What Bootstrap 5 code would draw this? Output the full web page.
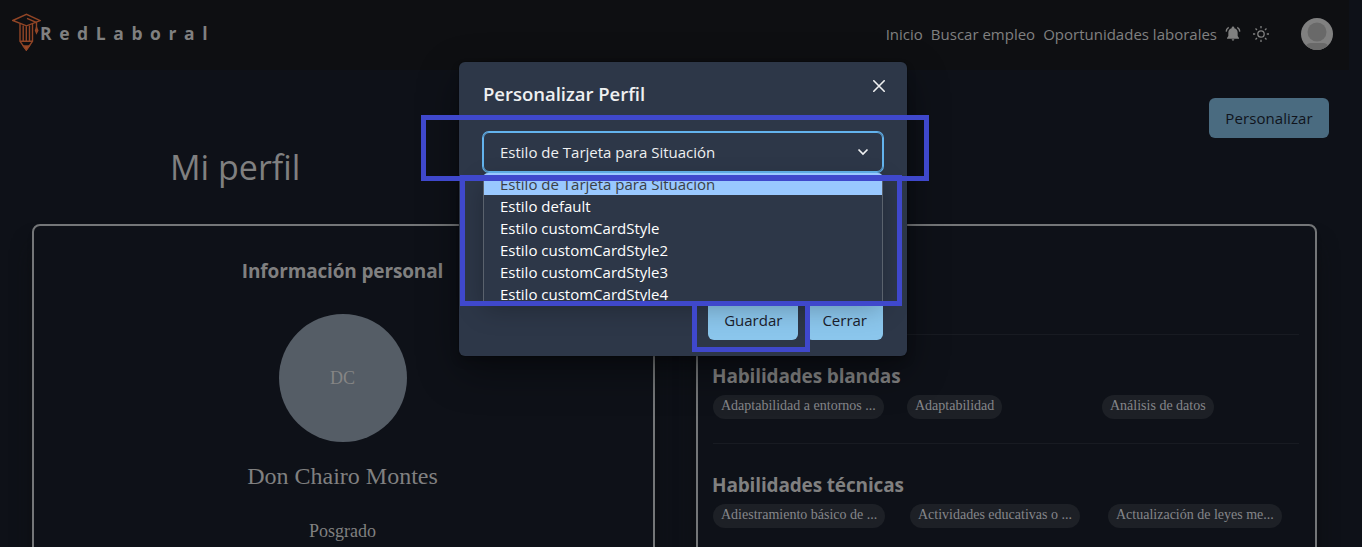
<!DOCTYPE html>
<html lang="es">
<head>
<meta charset="utf-8">
<meta name="viewport" content="width=device-width, initial-scale=1">
<title>RedLaboral - Mi perfil</title>
<link href="https://cdn.jsdelivr.net/npm/bootstrap@5.3.0/dist/css/bootstrap.min.css" rel="stylesheet">
<style>
body{background:#0e1118;color:#808080;font-family:"Open Sans","Noto Sans",sans-serif;font-size:15px;height:547px;overflow:hidden}
.serif-face{font-family:"Liberation Serif",serif}
.topbar{width:1349px;height:70px;background:#0e0f12;padding:0 16px 2px 12px}
.brand-text{font-weight:700;font-size:17.5px;letter-spacing:7.6px;line-height:24px;color:#808080;margin:-3px 0 0 -1px}
.topbar .nav-link{color:#808080;padding:0;line-height:24px}
.page-body{width:1349px;height:477px;overflow:hidden;padding:28px 20px 0 32px}
.btn-custom{--bs-btn-bg:#4a6b80;--bs-btn-color:#10141c;--bs-btn-border-width:0;--bs-btn-hover-bg:#527589;font-size:15px;font-weight:500;line-height:24px;padding:8px 16px;border-radius:6px;height:40px}
.btn-profile{width:120px;padding:8px 0;letter-spacing:.08px}
.page-title{font-size:34px;line-height:44px;font-weight:400;margin:7px 0 0 138px;height:79px;color:#808080}
.panel{background:#0e1118;border:2px solid #747678;border-radius:8px;height:340px;box-shadow:0 20px 25px -5px #0f1011,0 8px 10px -6px #0f1011}
.panel-info{width:623px;padding:33px 2px 0 0}
.panel-skills{width:621px;padding:108px 16px 0 15px}
.panel-title{font-size:19px;font-weight:700;line-height:24px;letter-spacing:-.15px;margin:0}
.initials{width:128px;height:128px;background:#555d66;font-size:18px;color:#858585;margin:31px auto 0}
.full-name{font-size:24px;line-height:32px;margin-top:18px}
.degree{font-size:18px;line-height:24px;margin-top:27px}
.skill-block{border-top:1px solid #181b22;height:109px;padding-top:29px}
.skill-block .panel-title{margin-left:-1px}
.skill-grid{display:grid;grid-template-columns:194px 195px auto;margin-top:7px;justify-items:start}
.skill-grid-wide{grid-template-columns:197px 198px auto}
.skill-tag{background:#1d2026;border-radius:12px;height:24px;padding:0 8px;font-size:14px;line-height:21px;color:#85868a;white-space:nowrap}
.dialog-wrap{position:absolute;left:459px;top:62px;width:448px}
.dialog-box{height:294px;border:0;border-radius:6px;background:#2d3748;color:#eff0f1;padding:0 24px 16px;box-shadow:0 0 0 1px rgba(0,0,0,.1),0 5px 10px rgba(0,0,0,.2),0 15px 40px rgba(0,0,0,.4)}
.dialog-title{font-size:18.5px;font-weight:600;letter-spacing:-.02px;line-height:30px;margin:17px 0 23px;height:30px}
.close-x{position:absolute;right:12px;top:8px;width:32px;height:32px;color:#eff0f1;background:none;border:0;padding:0;line-height:1}
.close-x svg{display:block;margin:auto}
.picker{height:40px;border:1px solid #63b3ed;box-shadow:0 0 0 1px #63b3ed;border-radius:6px;padding:0 13px 0 16px;line-height:24px}
.option-list{position:absolute;left:0;right:0;top:41px;height:130px;border:1px solid #5a626d;border-top:3px solid #99c8ff;border-radius:5px 5px 0 0;border-bottom:0;background:#2d3748;overflow:hidden;list-style:none;margin:0;padding:0;color:#fff}
.option-shadow{position:absolute;left:0;right:0;top:46px;height:125px;box-shadow:0 6px 24px rgba(0,0,0,.25)}
.option-list li{height:22px;line-height:23px;padding-left:16px}
.option-list li.chosen{background:#99c8ff;color:#3b4045;height:19px;line-height:17px}
.btn-dialog{--bs-btn-bg:#8bc6ec;--bs-btn-color:#1a202c;--bs-btn-hover-bg:#63b3ed}
.marker{position:absolute;border:5px solid #3f48cc;pointer-events:none}
.marker-select{left:-38px;top:53px;width:508px;height:66px}
.marker-list{left:1px;top:113px;width:442px;height:131px}
.marker-save{left:233px;top:239px;width:118px;height:51px}
</style>
</head>
<body>
<nav class="topbar d-flex align-items-center">
  <a class="d-flex align-items-center text-decoration-none" href="#">
    <svg width="29" height="38" viewBox="0 0 29 38" fill="none" stroke="#914526" stroke-width="1.4" style="margin-top:-4px">
      <path d="M.8 7.5 14.500 1.300 28.200 7.600 14.500 12.800ZM15 5.300 24.500 9.500V15"/>
      <path d="M24.500 14.500 23.500 17.500 24.500 20 25.800 17.500Z" fill="#914526"/>
      <path d="M8 11V28.300L14.300 37 20.500 28.300V11M11.200 12.600V27.800M14.300 13.200V27.800M17.500 12.600V27.800M8 28.300H20.500"/>
      <path d="M11.300 33H17.300L14.300 37Z" fill="#a54a25"/>
    </svg>
    <span class="brand-text">RedLaboral</span>
  </a>
  <div class="nav ms-auto align-items-center flex-nowrap gap-2">
    <a class="nav-link" href="#">Inicio</a>
    <a class="nav-link" href="#">Buscar empleo</a>
    <a class="nav-link" href="#">Oportunidades laborales</a>
    <svg width="16" height="16" viewBox="0 0 24 24" fill="#808080"><path d="M19 15V10C19 6.500 17 4.200 14 3.400V2.800a2 2 0 0 0-4 0v.6C7 4.200 5 6.500 5 10v5l-2 3v1h18v-1ZM10 20a2 2 0 0 0 4 0Z"/><path d="M5.500 2C3.200 3.500 2 5.500 1.800 8.500M18.500 2c2.300 1.500 3.500 3.500 3.700 6.500" fill="none" stroke="#808080" stroke-width="2"/></svg>
    <svg class="ms-1" width="16" height="16" viewBox="0 0 16 16" fill="none" stroke="#808080" stroke-width="1.300"><circle cx="8" cy="8" r="3.200"/><path d="M8 0v2.200M8 13.800V16M0 8h2.200M13.800 8H16M2.500 2.500 4 4M12 12l1.500 1.500M2.500 13.500 4 12M12 4l1.500-1.500"/></svg>
    <svg width="32" height="32" viewBox="0 0 32 32" style="margin-left:24px"><defs><clipPath id="face"><circle cx="16" cy="16" r="16"/></clipPath></defs><circle cx="16" cy="16" r="16" fill="#808080"/><g clip-path="url(#face)" fill="#696969"><circle cx="16" cy="14" r="9.500"/><path d="M5 28Q6 25 10 25H22Q26 25 27 28V32H5Z"/></g></svg>
  </div>
</nav>

<main class="page-body">
  <div class="d-flex justify-content-end"><button class="btn btn-custom btn-profile">Personalizar</button></div>
  <h1 class="page-title">Mi perfil</h1>
  <div class="d-flex justify-content-between" style="width:1285px">
    <section class="panel panel-info text-center">
      <h2 class="panel-title">Información personal</h2>
      <div class="serif-face">
        <div class="initials rounded-circle d-flex align-items-center justify-content-center">DC</div>
        <div class="full-name">Don Chairo Montes</div>
        <div class="degree">Posgrado</div>
      </div>
    </section>
    <section class="panel panel-skills">
      <div class="skill-block">
        <h2 class="panel-title">Habilidades blandas</h2>
        <div class="skill-grid serif-face">
          <span class="skill-tag">Adaptabilidad a entornos ...</span>
          <span class="skill-tag">Adaptabilidad</span>
          <span class="skill-tag">Análisis de datos</span>
        </div>
      </div>
      <div class="skill-block">
        <h2 class="panel-title">Habilidades técnicas</h2>
        <div class="skill-grid skill-grid-wide serif-face">
          <span class="skill-tag">Adiestramiento básico de ...</span>
          <span class="skill-tag">Actividades educativas o ...</span>
          <span class="skill-tag">Actualización de leyes me...</span>
        </div>
      </div>
    </section>
  </div>
</main>

<div class="dialog-wrap" role="dialog" aria-modal="true">
  <div class="modal-content dialog-box">
    <h2 class="dialog-title">Personalizar Perfil</h2>
    <button class="close-x" aria-label="Cerrar"><svg width="12" height="12" viewBox="0 0 12 12" stroke="currentColor" stroke-width="1.600" stroke-linecap="round"><path d="M.8.8 11.200 11.200M11.200.8.8 11.200"/></svg></button>
    <div class="position-relative">
      <div class="picker d-flex align-items-center justify-content-between">
        <span>Estilo de Tarjeta para Situación</span>
        <svg width="12" height="8" viewBox="0 0 12 8" fill="none" stroke="currentColor" stroke-width="1.700"><path d="M1.500 1.500 6 6l4.500-4.500"/></svg>
      </div>
      <div class="option-shadow z-2"></div>
      <ul class="option-list z-3">
        <li class="chosen">Estilo de Tarjeta para Situación</li>
        <li>Estilo default</li>
        <li>Estilo customCardStyle</li>
        <li>Estilo customCardStyle2</li>
        <li>Estilo customCardStyle3</li>
        <li>Estilo customCardStyle4</li>
      </ul>
    </div>
    <div class="d-flex justify-content-end mt-auto gap-2">
      <button class="btn btn-custom btn-dialog">Guardar</button>
      <button class="btn btn-custom btn-dialog">Cerrar</button>
    </div>
  </div>
  <div class="marker marker-save z-3"></div>
  <div class="marker marker-select z-3"></div>
  <div class="marker marker-list z-3"></div>
</div>
<script src="https://cdn.jsdelivr.net/npm/bootstrap@5.3.0/dist/js/bootstrap.bundle.min.js"></script>
</body>
</html>
